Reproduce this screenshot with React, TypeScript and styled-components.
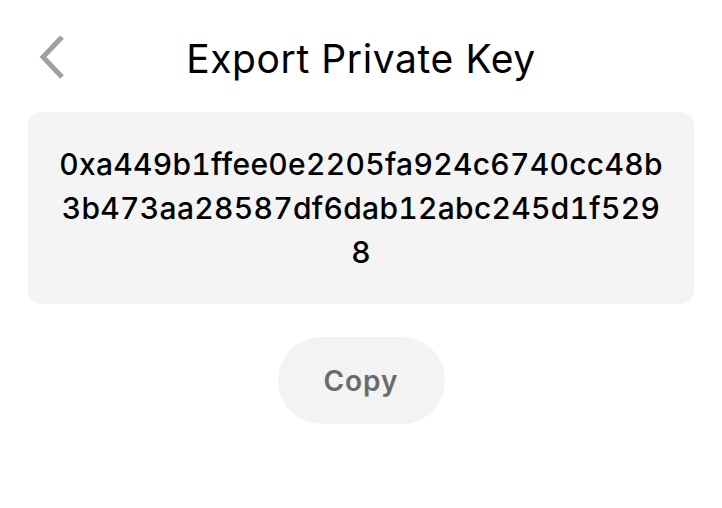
import React from 'react';
import styled, { createGlobalStyle } from 'styled-components';

const GlobalStyle = createGlobalStyle`
  html, body {
    margin: 0;
    padding: 0;
    background: #ffffff;
    font-family: Inter, "Noto Sans", sans-serif;
    color: #000;
  }
`;

const Page = styled.div`
  width: 722px;
  padding: 0 28px;
  box-sizing: border-box;
  display: flex;
  flex-direction: column;
  align-items: center;
`;

const Header = styled.div`
  width: 100%;
  height: 104px;
  margin-top: 6px;
  margin-bottom: 2px;
  display: grid;
  grid-template-columns: 60px 1fr 60px;
  align-items: center;
`;

const BackButton = styled.button`
  border: none;
  background: none;
  padding: 0;
  margin-left: 10px;
  width: 30px;
  height: 44px;
  display: flex;
  align-items: center;
  cursor: pointer;
`;

const Title = styled.h1`
  margin: 0;
  text-align: center;
  font-size: 39px;
  font-weight: 400;
  letter-spacing: 0.6px;
`;

const KeyBox = styled.div`
  width: 100%;
  box-sizing: border-box;
  background: #f4f4f4;
  border-radius: 14px;
  padding: 30px 30px;
  text-align: center;
  font-size: 30px;
  line-height: 44px;
  font-weight: 500;
  letter-spacing: 0.3px;
  font-variant-numeric: tabular-nums;
  word-break: break-all;
`;

const CopyButton = styled.button`
  margin-top: 33px;
  width: 167px;
  height: 87px;
  border: none;
  border-radius: 44px;
  background: #f3f3f3;
  color: #6b6b6b;
  font-family: Inter, "Noto Sans", sans-serif;
  font-size: 28px;
  font-weight: 600;
  letter-spacing: 1px;
  cursor: pointer;
`;

const ChevronLeft = () => (
  <svg width="28" height="44" viewBox="0 0 28 44" fill="none">
    <path d="M24 1 L5 21 L24 41" stroke="#a0a0a0" strokeWidth="5" strokeLinecap="butt" strokeLinejoin="miter" />
  </svg>
);

const App: React.FC = () => {
  const privateKey = '0xa449b1ffee0e2205fa924c6740cc48b3b473aa28587df6dab12abc245d1f5298';

  return (
    <>
      <GlobalStyle />
      <Page>
        <Header>
          <BackButton aria-label="Back">
            <ChevronLeft />
          </BackButton>
          <Title>Export Private Key</Title>
          <div />
        </Header>
        <KeyBox>{privateKey}</KeyBox>
        <CopyButton>Copy</CopyButton>
      </Page>
    </>
  );
};

export default App;
